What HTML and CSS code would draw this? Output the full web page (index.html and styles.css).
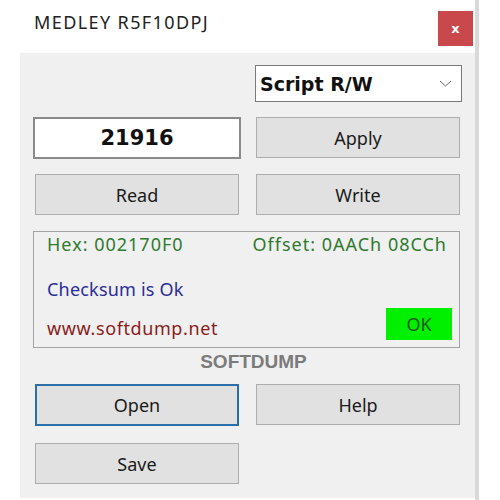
FILE: index.html
```html
<!DOCTYPE html>
<html lang="en">
<head>
    <meta charset="UTF-8">
    <meta name="viewport" content="width=device-width, initial-scale=1.0">
    <title>MEDLEY R5F10DPJ</title>
    <link rel="stylesheet" href="styles.css">
</head>
<body>
    <div class="window">
        <div class="title-bar">
            <div class="title-text">MEDLEY R5F10DPJ</div>
            <button class="close-button">x</button>
        </div>
        <div class="client">
            <div class="row">
                <div></div>
                <div class="select-box">
                    <span class="select-text">Script R/W</span>
                    <svg class="chevron" width="13" height="7" viewBox="0 0 13 7">
                        <polyline points="1,1 6.5,6 12,1" fill="none" stroke="#666" stroke-width="1"/>
                    </svg>
                </div>
            </div>
            <div class="row row-input">
                <div class="value-box">21916</div>
                <button class="btn">Apply</button>
            </div>
            <div class="row row-rw">
                <button class="btn">Read</button>
                <button class="btn">Write</button>
            </div>
            <div class="info-box">
                <div class="info-line info-top">
                    <span class="green-text">Hex: 002170F0</span>
                    <span class="green-text">Offset: 0AACh 08CCh</span>
                </div>
                <div class="info-line info-check">
                    <span class="blue-text">Checksum is Ok</span>
                </div>
                <div class="info-bottom">
                    <span class="red-text">www.softdump.net</span>
                    <div class="ok-box">OK</div>
                </div>
            </div>
            <div class="brand">SOFTDUMP</div>
            <div class="row">
                <button class="btn btn-focus">Open</button>
                <button class="btn">Help</button>
            </div>
            <div class="row row-save">
                <button class="btn">Save</button>
                <div></div>
            </div>
        </div>
    </div>
</body>
</html>
```

FILE: styles.css
```css
body {
    margin: 0;
    background-color: #ffffff;
    font-family: "Noto Sans", "Open Sans", sans-serif;
    color: #1a1a1a;
}

.window {
    width: 475px;
    height: 500px;
    border-right: 4px solid #d9d9d9;
    background-color: #ffffff;
}

.title-bar {
    display: flex;
    justify-content: space-between;
    align-items: flex-start;
    height: 53px;
    box-sizing: border-box;
    padding: 10px 2px 0 34px;
}
.title-text {
    font-size: 18px;
    letter-spacing: 1.4px;
    line-height: 24px;
    color: #222;
}
.close-button {
    margin-top: 1px;
    width: 35px;
    height: 35px;
    border: none;
    padding: 0;
    background-color: #c8484b;
    color: #fff;
    font-family: "DejaVu Sans", sans-serif;
    font-weight: bold;
    font-size: 13px;
}

.client {
    margin-left: 20px;
    height: 445px;
    box-sizing: border-box;
    padding: 12px 15px 0 15px;
    background-color: #f0f0f0;
}

.row {
    display: grid;
    grid-template-columns: 204px 204px;
    column-gap: 17px;
}
.row-input {
    margin-top: 15px;
}
.row-rw {
    margin-top: 15px;
}
.row-save {
    margin-top: 17px;
}

.select-box {
    display: flex;
    justify-content: space-between;
    align-items: center;
    height: 37px;
    margin: 0 -2px 0 -1px;
    box-sizing: border-box;
    border: 1px solid #7a7a7a;
    background-color: #fff;
    padding: 0 9px 0 4px;
}
.select-text {
    font-family: "DejaVu Sans", sans-serif;
    font-weight: bold;
    font-size: 19px;
    color: #111;
}

.value-box {
    height: 42px;
    margin: 0 -2px;
    box-sizing: border-box;
    border: 2px solid #8a8a8a;
    background-color: #fff;
    text-align: center;
    line-height: 38px;
    font-family: "DejaVu Sans", sans-serif;
    font-weight: bold;
    font-size: 21px;
    color: #111;
}

.btn {
    height: 41px;
    padding: 0;
    border: 1px solid #adadad;
    background-color: #e1e1e1;
    font-family: "Noto Sans", "Open Sans", sans-serif;
    font-size: 18px;
    color: #1a1a1a;
}
.btn-focus {
    height: 42px;
    border: 2px solid #2a6eaa;
}

.info-box {
    margin: 16px 0 0 -2px;
    height: 117px;
    box-sizing: border-box;
    border: 1px solid #a3a3a3;
    padding: 0 7px 7px 13px;
    font-size: 18px;
}
.info-line {
    height: 24px;
    line-height: 24px;
}
.info-top {
    display: flex;
    justify-content: space-between;
    margin-right: 5px;
    letter-spacing: 1px;
}
.info-check {
    margin-top: 21px;
    letter-spacing: 0.2px;
}
.info-bottom {
    display: flex;
    justify-content: space-between;
    align-items: flex-end;
    height: 32px;
    margin-top: 7px;
    line-height: 24px;
}
.green-text {
    color: #2f7a2f;
}
.blue-text {
    color: #2c2c9c;
}
.red-text {
    color: #8a1c1c;
    letter-spacing: 0.6px;
}
.ok-box {
    width: 66px;
    height: 32px;
    line-height: 32px;
    text-align: center;
    background-color: #00f000;
    color: #1d5a1d;
}

.brand {
    margin-top: 2px;
    height: 24px;
    line-height: 24px;
    margin-bottom: 10px;
    padding-left: 12px;
    text-align: center;
    font-family: "Liberation Sans", Arial, sans-serif;
    font-weight: bold;
    font-size: 19px;
    color: #7b7b7b;
}
```
